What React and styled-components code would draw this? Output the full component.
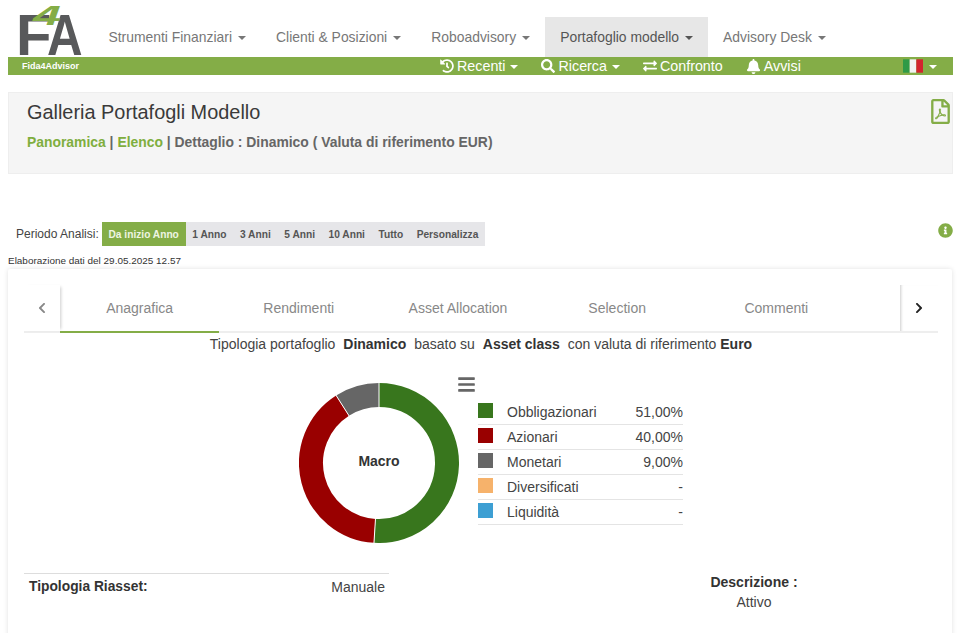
import React from "react";
import styled, { createGlobalStyle } from "styled-components";
import {
  FaHistory,
  FaSearch,
  FaExchangeAlt,
  FaBell,
  FaBars,
  FaChevronLeft,
  FaChevronRight,
  FaInfoCircle,
  FaRegFilePdf,
} from "react-icons/fa";

const GREEN = "#84ad47";

const GlobalStyle = createGlobalStyle`
  html, body {
    margin: 0;
    height: 633px;
    overflow: hidden;
    background: #fff;
    font-family: "Liberation Sans", Arial, sans-serif;
    color: #333;
  }
  * { box-sizing: border-box; }
`;

const Page = styled.div`
  width: 964px;
  height: 633px;
  overflow: hidden;
`;

const Header = styled.header`
  display: flex;
  align-items: flex-end;
  height: 57px;
  padding-left: 14px;
`;

const LogoBox = styled.svg`
  display: block;
  width: 69px;
  height: 57px;
  flex: none;
`;

const NavList = styled.nav`
  display: flex;
  margin-left: 10.5px;
`;

const NavItem = styled.a`
  display: flex;
  align-items: center;
  height: 40px;
  padding: 0 15px;
  font-size: 13.9px;
  white-space: nowrap;
  color: ${props => (props.$active ? "#555" : "#777")};
  background: ${props => (props.$active ? "#e7e7e7" : "transparent")};
`;

const Caret = styled.span`
  display: inline-block;
  width: 0;
  height: 0;
  margin-left: ${props => props.$gap ?? 6}px;
  margin-top: 2px;
  border-top: 4px solid currentColor;
  border-left: 4px solid transparent;
  border-right: 4px solid transparent;
`;

const GreenBar = styled.div`
  display: flex;
  align-items: center;
  height: 18px;
  margin: 0 11px 0 8px;
  background: ${GREEN};
  color: #fff;
  font-size: 14.3px;
`;

const Brand = styled.span`
  width: 432px;
  padding-left: 14px;
  font-size: 9px;
  font-weight: bold;
`;

const BarLink = styled.a`
  display: flex;
  align-items: center;
  gap: 3px;
  margin-right: ${props => props.$gap}px;
  svg { font-size: ${props => props.$icon || 14}px; }
`;

const FlagLink = styled.a`
  display: flex;
  align-items: center;
  margin-left: auto;
  margin-right: 16px;
`;

const Flag = styled.svg`
  display: block;
  width: 20px;
  height: 14px;
`;

const TitlePanel = styled.section`
  position: relative;
  height: 82px;
  margin: 17px 11px 0 8px;
  padding: 7px 18px;
  background: #f5f5f5;
  border: 1px solid #eee;
`;

const Title = styled.h1`
  margin: 0;
  font-size: 19.9px;
  line-height: 24px;
  font-weight: normal;
  color: #3a3a3a;
`;

const Breadcrumb = styled.p`
  margin: 8px 0 0;
  font-size: 13.9px;
  line-height: 20px;
  font-weight: bold;
  color: #666;
`;

const CrumbLink = styled.span`
  color: #7fae3e;
`;

const PdfIcon = styled(FaRegFilePdf)`
  position: absolute;
  top: 6px;
  right: -1px;
  font-size: 25px;
  color: ${GREEN};
`;

const PeriodRow = styled.div`
  display: flex;
  align-items: center;
  height: 24px;
  margin: 48px 11px 0 16px;
`;

const PeriodLabel = styled.span`
  margin-right: 3px;
  font-size: 12px;
  color: #444;
`;

const PeriodGroup = styled.div`
  display: flex;
  height: 24px;
  background: #e6e6e9;
`;

const PeriodButton = styled.span`
  display: flex;
  align-items: center;
  padding: 0 6.75px;
  font-size: 10.2px;
  font-weight: bold;
  color: ${props => (props.$active ? "#eef5e2" : "#555")};
  background: ${props => (props.$active ? GREEN : "transparent")};
`;

const InfoIcon = styled(FaInfoCircle)`
  margin-left: auto;
  margin-top: -8px;
  font-size: 15px;
  color: ${GREEN};
`;

const ProcessedAt = styled.div`
  height: 12px;
  margin: 9px 0 0 8px;
  font-size: 9.95px;
  line-height: 12px;
  color: #333;
`;

const Card = styled.section`
  height: 400px;
  margin: 2px 12px 0 8px;
  padding: 16px 14px 0 16px;
  background: #fff;
  border-radius: 2px;
  box-shadow: 0 0 5px rgba(0, 0, 0, 0.12);
`;

const TabBar = styled.div`
  display: flex;
  height: 48px;
  border-bottom: 2px solid #eee;
`;

const TabArrow = styled.div`
  display: flex;
  align-items: center;
  justify-content: center;
  flex: none;
  width: ${props => props.$width}px;
  font-size: 12px;
  color: ${props => (props.$dark ? "#222" : "#888")};
  box-shadow: ${props =>
    props.$dark ? "inset 3px 0 3px -2px rgba(0,0,0,.2)" : "3px 0 3px -2px rgba(0,0,0,.2)"};
`;

const TabList = styled.div`
  display: flex;
  flex: 1;
`;

const Tab = styled.div`
  display: flex;
  align-items: center;
  justify-content: center;
  width: 159.2px;
  height: 48px;
  font-size: 14px;
  color: #888;
  border-bottom: 2px solid ${props => (props.$active ? GREEN : "transparent")};
`;

const Summary = styled.p`
  margin: 1px 0 0;
  height: 19px;
  font-size: 14px;
  line-height: 20px;
  text-align: center;
  color: #444;

  b {
    margin: 0 4px;
    color: #333;
  }
  b:last-child {
    margin: 0;
  }
`;

const ChartRow = styled.div`
  display: flex;
  align-items: flex-start;
  height: 200px;
  padding: 30px 0 0 274.5px;
`;

const ChartMenu = styled(FaBars)`
  flex: none;
  margin: -8px 0 0 -1.5px;
  font-size: 19px;
  color: #666;
`;

const Legend = styled.div`
  flex: none;
  width: 205px;
  margin: 17px 0 0 2px;
  font-size: 14px;
`;

const LegendRow = styled.div`
  display: flex;
  align-items: center;
  height: 25px;
  color: #444;
  border-bottom: 1px solid #e4e4e4;
`;

const Swatch = styled.span`
  flex: none;
  width: 15px;
  height: 15px;
  margin: -4px 14px 0 0;
  background: ${props => props.$color};
`;

const LegendValue = styled.span`
  margin-left: auto;
`;

const Details = styled.div`
  display: flex;
  margin-top: 20px;
`;

const RiassetRow = styled.div`
  display: flex;
  justify-content: space-between;
  width: 365px;
  height: 30px;
  padding: 5px 4px 0 5px;
  font-size: 14px;
  line-height: 16px;
  color: #444;
  border-top: 1px solid #ddd;

  b {
    font-size: 13.8px;
    color: #333;
  }
`;

const DescriptionBox = styled.div`
  width: 130px;
  margin: -1px 0 0 300px;
  font-size: 14px;
  line-height: 20px;
  text-align: center;
  color: #444;

  b {
    display: block;
    color: #333;
  }
`;

const NAV = [
  { label: "Strumenti Finanziari" },
  { label: "Clienti & Posizioni" },
  { label: "Roboadvisory" },
  { label: "Portafoglio modello", active: true },
  { label: "Advisory Desk" },
];

const PERIODS = ["Da inizio Anno", "1 Anno", "3 Anni", "5 Anni", "10 Anni", "Tutto", "Personalizza"];
const TABS = ["Anagrafica", "Rendimenti", "Asset Allocation", "Selection", "Commenti"];

const LEGEND = [
  { label: "Obbligazionari", value: "51,00%", color: "#38761d" },
  { label: "Azionari", value: "40,00%", color: "#990000" },
  { label: "Monetari", value: "9,00%", color: "#666666" },
  { label: "Diversificati", value: "-", color: "#f6b26b" },
  { label: "Liquidità", value: "-", color: "#3d9fd3" },
];

const Logo = () => (
  <LogoBox viewBox="0 0 69 57">
    <text x="2" y="55" fontSize="58" fontWeight="bold" fill="#58595b" fontFamily="Liberation Sans">F</text>
    <text transform="translate(33 55) scale(0.85 1)" fontSize="58" fontWeight="bold" fill="#58595b" fontFamily="Liberation Sans">A</text>
    <text transform="translate(19 25) scale(1.8 1)" fontSize="28" fontWeight="bold" fontStyle="italic" fill="#84ad47" fontFamily="Liberation Sans">4</text>
  </LogoBox>
);

// donut slices, clockwise from twelve o'clock
const arc = (from, to) => {
  const cx = 80;
  const cy = 80;
  const r = 68;
  const a0 = (from / 100) * 2 * Math.PI;
  const a1 = (to / 100) * 2 * Math.PI;
  const large = to - from > 50 ? 1 : 0;
  return `M${cx + r * Math.sin(a0)} ${cy - r * Math.cos(a0)} A${r} ${r} 0 ${large} 1 ${cx + r * Math.sin(a1)} ${cy - r * Math.cos(a1)}`;
};

const Donut = () => {
  let start = 0;
  const slices = LEGEND.slice(0, 3).map(item => {
    const size = parseFloat(item.value);
    const slice = { color: item.color, d: arc(start, start + size) };
    start += size;
    return slice;
  });
  return (
    <svg width="160" height="160" viewBox="0 0 160 160" style={{ flex: "none" }}>
      {slices.map(s => (
        <path key={s.color} d={s.d} fill="none" stroke={s.color} strokeWidth="24" />
      ))}
      {[0, 51, 91].map(p => {
        const a = (p / 100) * 2 * Math.PI;
        return (
          <line
            key={p}
            x1={80 + 55 * Math.sin(a)}
            y1={80 - 55 * Math.cos(a)}
            x2={80 + 81 * Math.sin(a)}
            y2={80 - 81 * Math.cos(a)}
            stroke="#fff"
            strokeWidth="1"
          />
        );
      })}
      <text x="80" y="83" textAnchor="middle" fontSize="14" fontWeight="bold" fill="#333" fontFamily="Liberation Sans">
        Macro
      </text>
    </svg>
  );
};

const App = () => (
  <Page>
    <GlobalStyle />
    <Header>
      <Logo />
      <NavList>
        {NAV.map(item => (
          <NavItem key={item.label} $active={item.active}>
            {item.label}
            <Caret />
          </NavItem>
        ))}
      </NavList>
    </Header>
    <GreenBar>
      <Brand>Fida4Advisor</Brand>
      <BarLink $gap={23}><FaHistory />Recenti<Caret $gap={2} /></BarLink>
      <BarLink $gap={23}><FaSearch />Ricerca<Caret $gap={2} /></BarLink>
      <BarLink $gap={23}><FaExchangeAlt />Confronto</BarLink>
      <BarLink $icon={15}><FaBell />Avvisi</BarLink>
      <FlagLink>
        <Flag viewBox="0 0 3 2">
          <rect width="1" height="2" fill="#2f9a46" />
          <rect x="1" width="1" height="2" fill="#f2f2f2" />
          <rect x="2" width="1" height="2" fill="#d3232e" />
        </Flag>
        <Caret />
      </FlagLink>
    </GreenBar>
    <TitlePanel>
      <Title>Galleria Portafogli Modello</Title>
      <Breadcrumb>
        <CrumbLink>Panoramica</CrumbLink> | <CrumbLink>Elenco</CrumbLink> | Dettaglio : Dinamico ( Valuta di riferimento EUR)
      </Breadcrumb>
      <PdfIcon />
    </TitlePanel>
    <PeriodRow>
      <PeriodLabel>Periodo Analisi:</PeriodLabel>
      <PeriodGroup>
        {PERIODS.map((p, i) => (
          <PeriodButton key={p} $active={i === 0}>{p}</PeriodButton>
        ))}
      </PeriodGroup>
      <InfoIcon />
    </PeriodRow>
    <ProcessedAt>Elaborazione dati del 29.05.2025 12.57</ProcessedAt>
    <Card>
      <TabBar>
        <TabArrow $width={36}><FaChevronLeft /></TabArrow>
        <TabList>
          {TABS.map((t, i) => (
            <Tab key={t} $active={i === 0}>{t}</Tab>
          ))}
        </TabList>
        <TabArrow $width={38} $dark><FaChevronRight /></TabArrow>
      </TabBar>
      <Summary>
        Tipologia portafoglio <b>Dinamico</b> basato su <b>Asset class</b> con valuta di riferimento <b>Euro</b>
      </Summary>
      <ChartRow>
        <Donut />
        <ChartMenu />
        <Legend>
          {LEGEND.map(item => (
            <LegendRow key={item.label}>
              <Swatch $color={item.color} />
              {item.label}
              <LegendValue>{item.value}</LegendValue>
            </LegendRow>
          ))}
        </Legend>
      </ChartRow>
      <Details>
        <RiassetRow>
          <b>Tipologia Riasset:</b>
          <span>Manuale</span>
        </RiassetRow>
        <DescriptionBox>
          <b>Descrizione :</b>
          Attivo
        </DescriptionBox>
      </Details>
    </Card>
  </Page>
);

export default App;
